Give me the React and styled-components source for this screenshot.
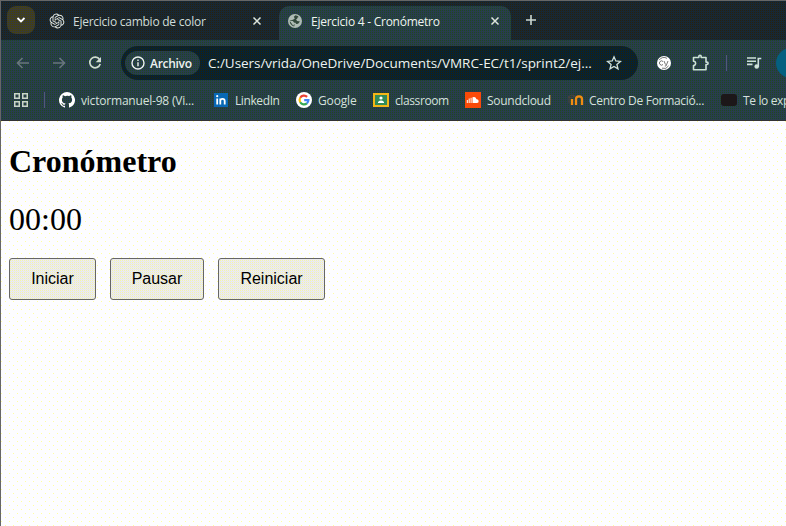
import React from "react";
import styled, { createGlobalStyle, css } from "styled-components";

const dither = (a, b, c, d) => css`
  background-color: ${a};
  background-image: conic-gradient(${b} 0 25%, ${c} 0 50%, ${d} 0 75%, ${a} 0);
  background-size: 2px 2px;
  background-attachment: fixed;
`;
const frameFill = dither("#26240c", "#182438", "#162a32", "#1a2634");
const toolFill = dither("#26481a", "#1f3a5a", "#303f46", "#243b50");
const fieldFill = dither("#242204", "#042436", "#082232", "#082034");

const Global = createGlobalStyle`
  * { box-sizing: border-box; }
  body { margin: 0; overflow: hidden; background: #fdfdff; }
`;
const Window = styled.div`
  width: 786px;
  height: 526px;
  overflow: hidden;
  display: flex;
  flex-direction: column;
  border-top: 1px solid #666;
  border-left: 1px solid #666;
  font-family: "Open Sans", "Noto Sans", sans-serif;
  font-size: 12px;
  color: #d5e0da;
  svg { display: block; flex: none; }
`;
const TabStrip = styled.header`
  height: 39px;
  flex: none;
  display: flex;
  ${frameFill}
`;
const TabSearch = styled.button`
  width: 28px;
  height: 28px;
  margin: 5px 0 0 6px;
  padding: 0;
  border: 0;
  border-radius: 9px;
  color: #fff;
  display: grid;
  place-items: center;
  ${dither("#4a4400", "#3a3a30", "#3a3c34", "#363a38")}
`;
const Tab = styled.div`
  width: ${(p) => (p.$active ? 232 : 233)}px;
  margin: 5px 0 0 ${(p) => (p.$active ? 0 : 11)}px;
  height: 34px;
  padding: 0 ${(p) => (p.$active ? 11 : 17)}px 4px ${(p) => (p.$active ? 9 : 3)}px;
  display: flex;
  align-items: center;
  gap: ${(p) => (p.$active ? 9 : 8)}px;
  border-radius: 10px 10px 0 0;
  ${(p) => p.$active && toolFill}
  color: ${(p) => (p.$active ? "#eef4ee" : "#d0dcd8")};
`;
const Label = styled.span`
  white-space: nowrap;
  width: ${(p) => p.$w}px;
  flex: none;
  letter-spacing: ${(p) => p.$ls || 0}px;
`;
const CloseSlot = styled.span`
  margin-left: auto;
`;
const NewTab = styled.div`
  margin: 13px 0 0 14px;
`;
const Toolbar = styled.nav`
  height: 46px;
  flex: none;
  display: flex;
  align-items: center;
  padding: 0 0 0 14px;
  ${toolFill}
`;
const NavButtons = styled.div`
  width: 106px;
  flex: none;
  display: flex;
  gap: 20px;
`;
const Address = styled.div`
  width: 517px;
  flex: none;
  height: 34px;
  border-radius: 17px;
  display: flex;
  align-items: center;
  padding: 0 16px 0 4px;
  font-size: 13.5px;
  color: #edf3f0;
  ${fieldFill}
`;
const FileChip = styled.span`
  width: 75px;
  flex: none;
  height: 24px;
  border-radius: 12px;
  display: flex;
  align-items: center;
  gap: 5px;
  padding-left: 6px;
  margin-right: 8px;
  font-size: 12px;
  font-weight: 600;
  ${toolFill}
`;
const StarSlot = styled.span`
  margin-left: auto;
`;
const Extensions = styled.div`
  display: flex;
  flex: none;
  align-items: center;
  padding-left: 19px;
`;
const Slot = styled.span`
  margin-right: ${(p) => p.$after}px;
`;
const Divider = styled.span`
  width: 1px;
  height: 16px;
  flex: none;
  background: #525a76;
  margin-right: ${(p) => p.$after}px;
`;
const Avatar = styled.span`
  width: 30px;
  height: 30px;
  flex: none;
  border-radius: 50%;
  background: #056080;
`;
const Bookmarks = styled.nav`
  height: 35px;
  flex: none;
  display: flex;
  align-items: center;
  padding: 0 0 6px 12px;
  border-bottom: 1px solid #333;
  ${toolFill}
`;
const Bookmark = styled.a`
  display: flex;
  align-items: center;
  gap: ${(p) => p.$gap || 6}px;
  width: ${(p) => p.$w}px;
  flex: none;
`;
const Page = styled.main`
  flex: 1;
  padding: 21px 8px;
  background-color: #fdfdff;
  background-image:
    conic-gradient(from 270deg at 1px 1px, #ffffa0 0 25%, transparent 0),
    conic-gradient(from 270deg at 1px 1px, #ffffa0 0 25%, transparent 0);
  background-size: 8px 8px;
  background-position: 1px 1px, 5px 5px;
  background-attachment: fixed;
  color: #000;
  font-family: "Liberation Serif", serif;
`;
const Title = styled.h1`
  margin: 0;
  font-size: 32px;
  line-height: 38px;
`;
const Time = styled.div`
  margin-top: 21px;
  font-size: 32px;
  line-height: 37px;
`;
const Actions = styled.div`
  display: flex;
  gap: 14px;
  margin-top: 20px;
`;
const Action = styled.button`
  width: ${(p) => p.$w}px;
  height: 42px;
  padding: 0;
  border: 1px solid #666;
  border-radius: 3px;
  font: 16px "Liberation Sans", sans-serif;
  color: #000;
  ${dither("#f5f5a8", "#eaeaf6", "#eeeee0", "#e6e6fa")}
`;

const Cross = () => (
  <svg width="10" height="10" viewBox="0 0 10 10" stroke="#dde6dd" strokeWidth="1.5"><path d="M1.5 1.5l7 7m0-7l-7 7" /></svg>
);
const Swirl = () => (
  <svg width="16" height="16" viewBox="-1 -1 26 26" fill="#e4ebe6">
    <path d="M22.28 9.82a5.98 5.98 0 0 0-.52-4.91 6.05 6.05 0 0 0-6.51-2.9A6.07 6.07 0 0 0 4.98 4.18a5.98 5.98 0 0 0-4 2.9 6.05 6.05 0 0 0 .74 7.1 5.98 5.98 0 0 0 .51 4.91 6.05 6.05 0 0 0 6.51 2.9A5.98 5.98 0 0 0 13.26 24a6.06 6.06 0 0 0 5.77-4.21 5.99 5.99 0 0 0 4-2.9 6.06 6.06 0 0 0-.75-7.07zm-9.02 12.61a4.48 4.48 0 0 1-2.88-1.04l.14-.08 4.78-2.76a.79.79 0 0 0 .39-.68v-6.74l2.02 1.17.04.05v5.58a4.5 4.5 0 0 1-4.49 4.5zM3.6 18.3a4.47 4.47 0 0 1-.53-3.01l.14.08 4.78 2.76a.77.77 0 0 0 .78 0l5.84-3.37v2.33l-.03.06-4.83 2.79A4.5 4.5 0 0 1 3.6 18.3zM2.34 7.9a4.49 4.49 0 0 1 2.37-1.98v5.68a.77.77 0 0 0 .39.68l5.81 3.35-2.02 1.17h-.07l-4.83-2.79A4.5 4.5 0 0 1 2.34 7.9zm16.6 3.85-5.84-3.38 2.02-1.16h.07l4.83 2.79a4.49 4.49 0 0 1-.68 8.1v-5.67a.79.79 0 0 0-.4-.68zm2.01-3.02-.14-.09-4.77-2.78a.78.78 0 0 0-.79 0L9.41 9.23V6.9l.03-.06 4.83-2.79a4.5 4.5 0 0 1 6.68 4.68zM8.31 12.86l-2.02-1.16-.04-.06V6.07a4.5 4.5 0 0 1 7.38-3.45l-.14.08-4.78 2.76a.79.79 0 0 0-.39.68zm1.1-2.36 2.6-1.5 2.6 1.5v3l-2.6 1.5-2.6-1.5z" />
  </svg>
);
const Globe = () => (
  <svg width="14" height="14" viewBox="0 0 14 14">
    <circle cx="7" cy="7" r="7" fill="#aebbb4" />
    <path d="M7.5 1.2L5.8 2.8 6.8 4.6 5 5.8l-3.2.6a5.5 5.5 0 0 0 4.4 6l.4-1.8L5 9.3l2.2-.8 1 1.5 1.9-.3L12 7.5 9.2 7 8 5.4l2-1.2.3-1.9z" fill="#33483c" />
    <path d="M1.6 6.8l3.3.2 1.6 2.2-1.2 2.6zM9 3.4l2.6.8.9 2.8-2.7-1z" fill="#aebbb4" />
  </svg>
);
const Arrow = ({ flip }) => (
  <svg width="16" height="16" viewBox="0 0 16 16" fill="none" stroke="#68767c" strokeWidth="1.6">
    <path d={flip ? "M2 8h11M8.5 3l5 5-5 5" : "M14 8H3M7.5 3l-5 5 5 5"} />
  </svg>
);
const Reload = () => (
  <svg width="16" height="16" viewBox="0 0 16 16">
    <path d="M12.6 4.6A5.3 5.3 0 1 0 13.2 9" fill="none" stroke="#cfdbd0" strokeWidth="1.7" />
    <path d="M14 2v5.3H8.7z" fill="#cfdbd0" />
  </svg>
);
const Info = () => (
  <svg width="14" height="14" viewBox="0 0 14 14"><circle cx="7" cy="7" r="6" fill="none" stroke="#edf3f0" strokeWidth="1.4" /><path d="M7 6.2v4M7 3.5v1.5" stroke="#edf3f0" strokeWidth="1.4" /></svg>
);
const Star = () => (
  <svg width="16" height="16" viewBox="0 0 16 16" fill="none" stroke="#cfe0dc" strokeWidth="1.3"><path d="M8 1.8l1.8 4.2 4.6.4-3.5 3 1.1 4.5L8 11.5 4 13.9l1.1-4.5-3.5-3 4.6-.4z" /></svg>
);
const Cypress = () => (
  <svg width="14" height="14" viewBox="0 0 14 14">
    <circle cx="7" cy="7" r="7" fill="#fff" />
    <path d="M6 5.5a2.1 2.1 0 1 0 0 3M7 5l1.5 3.6M11 5L9 10H7.8M2.2 4.1A5.5 5.5 0 0 1 10 2.4M11.6 9.8A5.5 5.5 0 0 1 5 12.2" fill="none" stroke="#555" strokeWidth=".8" />
  </svg>
);
const Puzzle = () => (
  <svg width="18" height="18" viewBox="0 0 18 18" fill="none" stroke="#cce0d8" strokeWidth="1.6">
    <path d="M1.5 3.5h5.3V2.6a1.2 1.2 0 0 1 2.4 0v.9H14v4.6h.9a1.2 1.2 0 0 1 0 2.4H14v5.3H1.5v-4.3a2 2 0 0 0 0-4.2z" strokeLinejoin="round" />
  </svg>
);
const Queue = () => (
  <svg width="16" height="14" viewBox="0 0 16 14"><path d="M1 2h9M1 5.2h9M1 8.4h5.5M12.3 11V2.5h3" fill="none" stroke="#cce0d8" strokeWidth="1.6" /><circle cx="10.7" cy="10.5" r="2.3" fill="#cce0d8" /></svg>
);
const Grid = () => (
  <svg width="16" height="16" viewBox="0 0 16 16" fill="none" stroke="#c8d4c8" strokeWidth="1.5">
    <path d="M1.75 1.75h4.5v4.5h-4.5zM9.75 1.75h4.5v4.5h-4.5zM1.75 9.75h4.5v4.5h-4.5zM9.75 9.75h4.5v4.5h-4.5z" />
  </svg>
);
const Octocat = () => (
  <svg width="16" height="16" viewBox="0 0 16 16" fill="#fff"><path d="M8 0a8 8 0 0 0-2.53 15.59c.4.07.55-.17.55-.38v-1.49c-2.23.48-2.7-.95-2.7-.95-.36-.93-.89-1.17-.89-1.17-.73-.5.05-.49.05-.49.8.06 1.23.83 1.23.83.72 1.23 1.87.87 2.33.67.07-.52.28-.87.51-1.07-1.78-.2-3.64-.89-3.64-3.95 0-.87.31-1.59.82-2.15-.08-.2-.36-1.02.08-2.12 0 0 .67-.21 2.2.82A7.65 7.65 0 0 1 8 3.87c.68 0 1.36.09 2 .27 1.53-1.04 2.2-.82 2.2-.82.44 1.1.16 1.92.08 2.12.51.56.82 1.27.82 2.15 0 3.07-1.87 3.75-3.65 3.95.29.25.54.73.54 1.48v2.19c0 .21.15.46.55.38A8 8 0 0 0 8 0z" /></svg>
);
const LinkedIn = () => (
  <svg width="14" height="14" viewBox="0 0 14 14"><path fill="#0868b5" d="M0 0h14v14H0z" /><path d="M3.2 5.5v6M6.3 5.5v6M6.3 8a2 2 0 0 1 4.4 0v3.5" stroke="#fff" strokeWidth="1.8" fill="none" /><circle cx="3.2" cy="3.2" r="1.1" fill="#fff" /></svg>
);
const Google = () => (
  <svg width="16" height="16" viewBox="0 0 16 16" fill="none" strokeWidth="2.2"><circle cx="8" cy="8" r="8" fill="#fff" /><path d="M11.1 4.9A4.4 4.4 0 0 0 4.2 5.8" stroke="#ea4335" /><path d="M4.2 5.8a4.4 4.4 0 0 0 0 4.4" stroke="#fbbc05" /><path d="M4.2 10.2a4.4 4.4 0 0 0 6.7 1.1" stroke="#34a853" /><path d="M10.9 11.3A4.4 4.4 0 0 0 12.4 8.2H8.2" stroke="#4285f4" /></svg>
);
const Classroom = () => (
  <svg width="16" height="14" viewBox="0 0 16 14"><path fill="#f4b616" d="M0 0h16v14H0z" /><path fill="#328b58" d="M2 2h12v10H2z" /><circle cx="8" cy="5" r="1.6" fill="#fff" /><path d="M5 10V9q3-2.8 6 0v1z" fill="#fff" /></svg>
);
const Soundcloud = () => (
  <svg width="16" height="16" viewBox="0 0 16 16"><path fill="#fa4a08" d="M0 0h16v16H0z" /><path d="M2.3 8v3M4.2 6.5V11M6.1 5.8V11" stroke="#fff" strokeWidth="1" /><path d="M7.5 5.3q3-1.3 4 2a1.9 1.9 0 0 1 .5 3.8H7.5z" fill="#fff" /></svg>
);
const Centro = () => (
  <svg width="16" height="12" viewBox="0 0 16 12" fill="none"><path d="M0 3l4-2 3 1-4 2zM1 4v5" stroke="#4b433e" /><path d="M4 5v6M8 11V5a2.8 2.5 0 0 1 6 0v6" stroke="#f08c12" strokeWidth="2.3" /></svg>
);
const Dark = () => (
  <svg width="16" height="14" viewBox="0 0 16 14"><rect y="1" width="16" height="12" rx="3" fill="#1c1719" /></svg>
);

const links = [
  { icon: Octocat, text: "victormanuel-98 (Vi...", w: 155, tw: 115, ls: -0.2 },
  { icon: LinkedIn, text: "LinkedIn", w: 82, tw: 46, ls: -0.4, gap: 7 },
  { icon: Google, text: "Google", w: 77, tw: 40, ls: -0.15 },
  { icon: Classroom, text: "classroom", w: 92, tw: 54, ls: -0.4 },
  { icon: Soundcloud, text: "Soundcloud", w: 103, tw: 65, ls: -0.28 },
  { icon: Centro, text: "Centro De Formació...", w: 153, tw: 116, ls: -0.3, gap: 5 },
  { icon: Dark, text: "Te lo exp", w: 72, tw: 50, ls: -0.35 },
];

export default function App() {
  return (
    <Window>
      <Global />
      <TabStrip>
        <TabSearch><svg width="10" height="8" viewBox="0 0 10 8" fill="none" stroke="#fff" strokeWidth="1.8"><path d="M1.5 2L5 5.5 8.5 2" /></svg></TabSearch>
        <Tab><Swirl /><Label $w={150} $ls={-0.25}>Ejercicio cambio de color</Label><CloseSlot><Cross /></CloseSlot></Tab>
        <Tab $active><Globe /><Label $w={145} $ls={-0.25}>Ejercicio 4 - Cronómetro</Label><CloseSlot><Cross /></CloseSlot></Tab>
        <NewTab><svg width="12" height="12" viewBox="0 0 12 12" stroke="#cbd8d2" strokeWidth="1.6"><path d="M6 1v10M1 6h10" /></svg></NewTab>
      </TabStrip>
      <Toolbar>
        <NavButtons><Arrow /><Arrow flip /><Reload /></NavButtons>
        <Address>
          <FileChip><Info /><Label $w={45} $ls={-0.3}>Archivo</Label></FileChip>
          <Label $w={390} $ls={-0.05}>C:/Users/vrida/OneDrive/Documents/VMRC-EC/t1/sprint2/ej...</Label>
          <StarSlot><Star /></StarSlot>
        </Address>
        <Extensions>
          <Slot $after={21}><Cypress /></Slot>
          <Slot $after={16}><Puzzle /></Slot>
          <Divider $after={19} />
          <Slot $after={14}><Queue /></Slot>
          <Avatar />
        </Extensions>
      </Toolbar>
      <Bookmarks>
        <Slot $after={15}><Grid /></Slot>
        <Divider $after={14} />
        {links.map(({ icon: Icon, text, w, tw, ls, gap }) => (
          <Bookmark key={text} $w={w} $gap={gap}><Icon /><Label $w={tw} $ls={ls}>{text}</Label></Bookmark>
        ))}
      </Bookmarks>
      <Page>
        <Title>Cronómetro</Title>
        <Time>00:00</Time>
        <Actions><Action $w={87}>Iniciar</Action><Action $w={94}>Pausar</Action><Action $w={107}>Reiniciar</Action></Actions>
      </Page>
    </Window>
  );
}
